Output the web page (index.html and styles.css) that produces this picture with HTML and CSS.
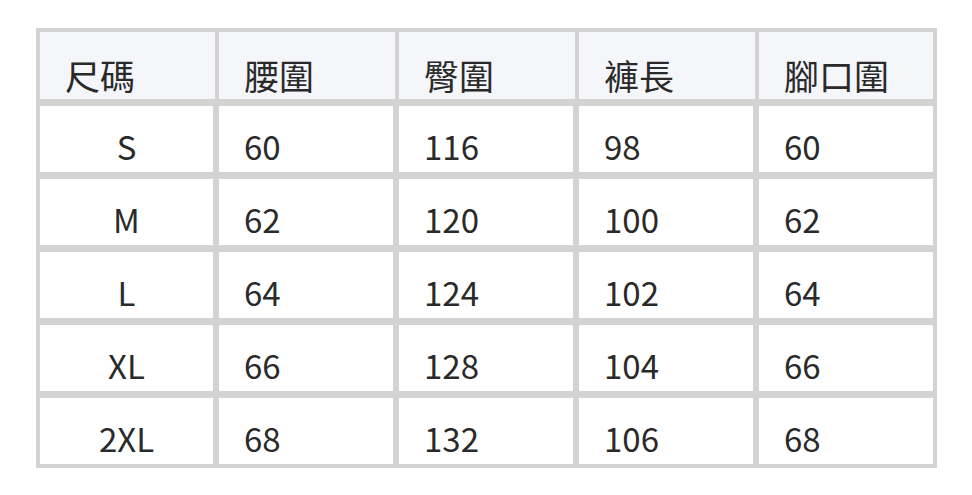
FILE: index.html
```html
<!DOCTYPE html>
<html lang="zh-Hant">
<head>
<meta charset="utf-8">
<title>尺碼表</title>
<link rel="stylesheet" href="styles.css">
</head>
<body>
<div class="page">
  <div class="size-table">
    <div class="cell head first">尺碼</div>
    <div class="cell head">腰圍</div>
    <div class="cell head">臀圍</div>
    <div class="cell head">褲長</div>
    <div class="cell head">腳口圍</div>

    <div class="cell body first center">S</div>
    <div class="cell body">60</div>
    <div class="cell body">116</div>
    <div class="cell body">98</div>
    <div class="cell body last">60</div>

    <div class="cell body first center">M</div>
    <div class="cell body">62</div>
    <div class="cell body">120</div>
    <div class="cell body">100</div>
    <div class="cell body last">62</div>

    <div class="cell body first center">L</div>
    <div class="cell body">64</div>
    <div class="cell body">124</div>
    <div class="cell body">102</div>
    <div class="cell body last">64</div>

    <div class="cell body first center">XL</div>
    <div class="cell body">66</div>
    <div class="cell body">128</div>
    <div class="cell body">104</div>
    <div class="cell body last">66</div>

    <div class="cell body first center">2XL</div>
    <div class="cell body">68</div>
    <div class="cell body">132</div>
    <div class="cell body">106</div>
    <div class="cell body last">68</div>
  </div>
</div>
</body>
</html>
```

FILE: styles.css
```css
html, body {
  margin: 0;
  padding: 0;
  background: #ffffff;
}

.page {
  padding: 28px 0 0 36px;
}

.size-table {
  display: grid;
  grid-template-columns: 175px 176px 176px 176px 174px;
  grid-template-rows: 67px repeat(5, 66px);
  column-gap: 4px;
  row-gap: 7px;
  padding: 4px;
  width: 893px;
  background: #d3d3d3;
  font-family: "Noto Sans CJK TC", "Noto Sans", sans-serif;
  color: #2a2a2a;
}

.cell {
  display: flex;
  align-items: flex-end;
  box-sizing: border-box;
  padding-left: 25px;
}

.head {
  background: #f5f6fa;
  font-size: 35px;
  line-height: 35px;
  padding-bottom: 7px;
}

.body {
  background: #ffffff;
  font-size: 33px;
  line-height: 33px;
  padding-bottom: 9px;
  border-right: 2px solid #d3d3d3;
}

.body.last {
  border-right: none;
}

.center {
  justify-content: center;
  padding-left: 0;
}
```
